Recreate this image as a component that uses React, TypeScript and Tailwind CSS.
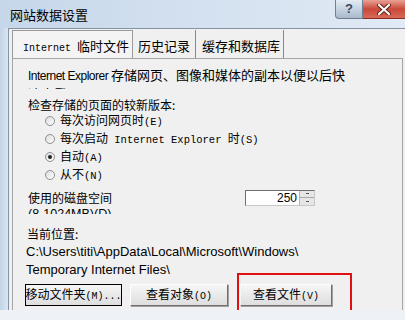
import React from 'react';

const cjk = { fontFamily: '"Noto Sans CJK SC", "Liberation Sans", sans-serif' };
const mono = { fontFamily: '"Liberation Mono", "Noto Sans CJK SC", monospace' };
const sans = { fontFamily: '"Liberation Sans", "Noto Sans CJK SC", sans-serif' };

function Radio({ checked }: { checked?: boolean }) {
  return (
    <span className="w-[10px] h-[10px] rounded-full border border-[#8f8f8f] bg-gradient-to-br from-[#dcdcdc] to-white flex items-center justify-center shrink-0">
      {checked && <span className="w-[4px] h-[4px] rounded-full bg-[#222]" />}
    </span>
  );
}

function Btn({ label, hot, w, focus }: { label: string; hot: string; w: string; focus?: boolean }) {
  return (
    <div
      className={`${w} h-[22px] flex items-center justify-center whitespace-nowrap text-[12px] text-black bg-gradient-to-b from-[#f6f6f6] to-[#dedede] ${
        focus
          ? 'border border-black'
          : 'border border-t-white border-l-white border-r-[#707070] border-b-[#707070] shadow-[1px_1px_0_#a0a0a0]'
      }`}
      style={cjk}
    >
      <span className="leading-[16px]">
        {label}
        <span className="text-[10px]" style={mono}>{hot}</span>
      </span>
    </div>
  );
}

export default function App() {
  const radios = [
    { text: '每次访问网页时', hot: '(E)' },
    { text: '每次启动', mid: '\u00a0Internet Explorer\u00a0', tail: '时', hot: '(S)' },
    { text: '自动', hot: '(A)', checked: true },
    { text: '从不', hot: '(N)' },
  ];

  return (
    <div className="w-[405px] h-[320px] overflow-hidden bg-[#eef2f7] flex flex-col relative">
      {/* title bar */}
      <div className="h-[28px] shrink-0 flex items-start bg-gradient-to-r from-[#c6d7ea] via-[#d4e1f0] to-[#e1eaf5]">
        <div className="pl-[10px] pt-[5px] text-[13px] text-black" style={cjk}>网站数据设置</div>
        <div className="ml-auto flex">
          <div className="w-[28px] h-[19px] rounded-bl-[4px] border border-t-0 border-[#6f7f92] bg-gradient-to-b from-[#e4ecf5] to-[#a9b9cc] flex items-center justify-center text-[13px] font-bold text-[#3b4a5e]" style={sans}>
            ?
          </div>
          <div className="w-[42px] h-[19px] border-b border-[#8a2c22] bg-gradient-to-b from-[#e8a093] via-[#c9483a] to-[#d86a57] flex items-center justify-center">
            <svg width="14" height="11" viewBox="0 0 14 11">
              <path d="M2 1 L12 10 M12 1 L2 10" stroke="#5a1a12" strokeWidth="4" strokeLinecap="round" />
              <path d="M2 1 L12 10 M12 1 L2 10" stroke="#ffffff" strokeWidth="2.2" strokeLinecap="round" />
            </svg>
          </div>
        </div>
      </div>

      {/* body */}
      <div className="h-[282px] shrink-0 flex">
        <div className="w-[8px] bg-gradient-to-r from-[#c2d3e7] to-[#dae5f2]" />
        <div className="flex-1 bg-[#f0f0f0] border-l border-t border-[#8593a5] flex flex-col pl-[3px] pt-[1px]">
          {/* tabs */}
          <div className="h-[28px] flex items-stretch text-[13px] text-black" style={cjk}>
            <div className="w-[121px] border-l border-t border-r border-[#9a9a9a] bg-[#f4f4f4] flex items-center pl-[10px] pt-[2px] whitespace-nowrap">
              <span>
                <span className="text-[10px]" style={mono}>Internet&nbsp;</span>
                临时文件
              </span>
            </div>
            <div className="flex items-center pl-[5px] pr-[5px] pt-[4px] border-r border-[#8a8a8a]">历史记录</div>
            <div className="flex items-center pl-[6px] pr-[3px] pt-[4px] border-r border-[#8a8a8a]">缓存和数据库</div>
          </div>

          {/* panel */}
          <div className="flex-1 mr-[2px] border-l border-t border-r border-[#a5a5a5] bg-[#f0f0f0] pl-[13px] pt-[7px] flex flex-col text-[12px] text-black" style={cjk}>
            <div className="h-[23px] overflow-hidden leading-[17px] ml-[2px] w-[330px] text-[13px]">
              <span className="text-[12px] tracking-[-0.5px]" style={sans}>Internet Explorer </span>
              存储网页、图像和媒体的副本以便以后快速查看
            </div>
            <div className="mt-[9px] h-[14px] leading-[14px] ml-[2px]">检查存储的页面的较新版本:</div>
            {radios.map((r, i) => (
              <div key={i} className="h-[18px] flex items-center pl-[19px] whitespace-nowrap">
                <Radio checked={r.checked} />
                <span className="ml-[5px]">
                  {r.text}
                  {r.mid && <span className="text-[10.5px]" style={mono}>{r.mid}</span>}
                  {r.tail}
                  <span className="text-[10.5px]" style={mono}>{r.hot}</span>
                </span>
              </div>
            ))}
            <div className="mt-[5px] h-[17px] flex items-center ml-[2px]">
              <span className="w-[217px]">使用的磁盘空间</span>
              <div className="w-[70px] h-[16px] flex border border-[#6f6f6f] border-r-[#c8c8c8] border-b-[#c8c8c8] bg-white">
                <div className="flex-1 text-right pr-[2px] leading-[14px] text-[12px]" style={sans}>250</div>
                <div className="w-[15px] flex flex-col bg-[#e6e6e6] border-l border-[#b5b5b5]">
                  <div className="flex-1 flex items-center justify-center border-b border-[#a8a8a8]">
                    <span className="w-[3px] h-[1px] bg-[#555]" />
                  </div>
                  <div className="flex-1 flex items-center justify-center">
                    <span className="w-[3px] h-[1px] bg-[#555]" />
                  </div>
                </div>
              </div>
            </div>
            <div className="mt-[1px] h-[7px] overflow-hidden leading-[14px] ml-[2px] text-[12.5px]" style={sans}>(8-1024MB)(D)</div>
            <div className="mt-[11px] h-[18px] leading-[18px] ml-[1px]">当前位置:</div>
            <div className="h-[18px] leading-[18px] text-[13px] whitespace-nowrap" style={sans}>C:\Users\titi\AppData\Local\Microsoft\Windows\</div>
            <div className="h-[18px] leading-[18px] text-[13px]" style={sans}>Temporary Internet Files\</div>
            <div className="mt-[5px] flex -ml-[1px]">
              <Btn label="移动文件夹" hot="(M)..." w="w-[97px]" focus />
              <div className="ml-[8px]"><Btn label="查看对象" hot="(O)" w="w-[98px]" /></div>
              <div className="ml-[12px]"><Btn label="查看文件" hot="(V)" w="w-[92px]" /></div>
            </div>
          </div>
        </div>
      </div>

      {/* annotation box */}
      <div className="absolute left-[237px] top-[273px] w-[115px] h-[37px] border-2 border-b-0 border-[#e01010]" />
    </div>
  );
}
